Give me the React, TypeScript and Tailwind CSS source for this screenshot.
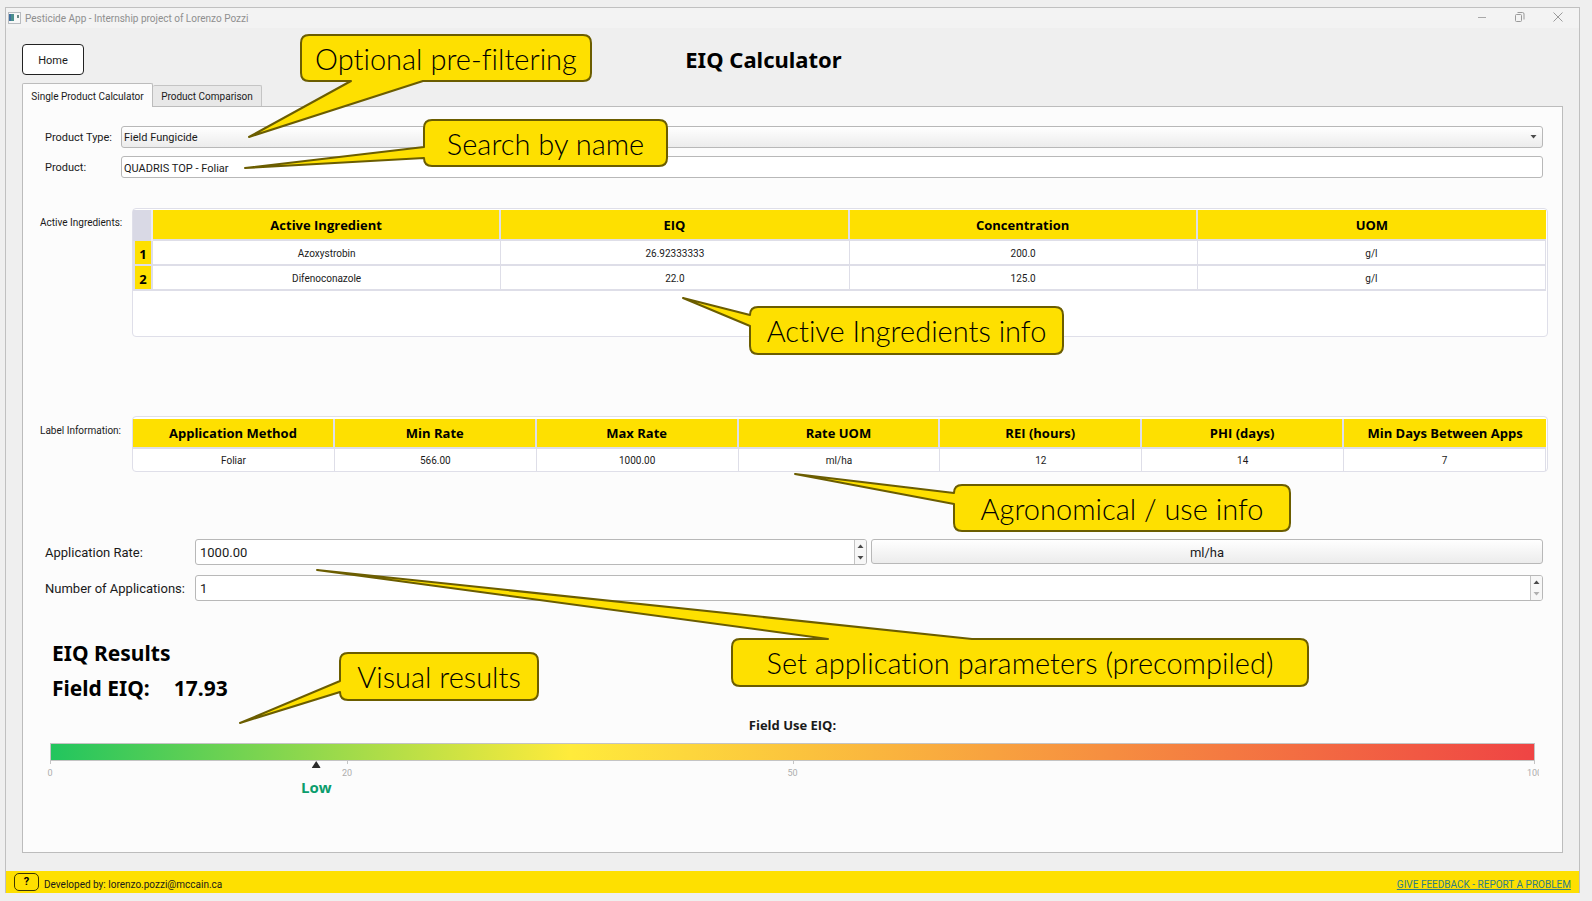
import React, { useState } from "react";

type CalloutProps = { text: string; place: string; w: number; h: number; path: string };

/* Speech-bubble annotation: the outline is drawn in the bubble's own coordinates. */
function Callout({ text, place, w, h, path }: CalloutProps) {
  return (
    <div className={`pointer-events-none absolute flex items-center justify-center ${place}`}>
      <svg className="absolute inset-0 overflow-visible" width={w} height={h} aria-hidden="true">
        <path d={path} fill="#fee000" stroke="#6b5d00" strokeWidth="2" strokeLinejoin="round" />
      </svg>
      <span className="relative pt-px font-['Lato',sans-serif] text-[29px] leading-8 font-light whitespace-nowrap text-black [font-variant-ligatures:none]">{text}</span>
    </div>
  );
}

const callouts: CalloutProps[] = [
  {
    text: "Optional pre-filtering",
    place: "left-[301px] top-[35px] h-[46px] w-[290px]",
    w: 290,
    h: 46,
    path: "M8 0H282Q290 0 290 8V38Q290 46 282 46H122L-52 102L50 46H8Q0 46 0 38V8Q0 0 8 0Z",
  },
  {
    text: "Search by name",
    place: "left-[424px] top-[120px] h-[46px] w-[243px]",
    w: 243,
    h: 46,
    path: "M8 0H235Q243 0 243 8V38Q243 46 235 46H8Q0 46 0 38L-179 48L0 27V8Q0 0 8 0Z",
  },
  {
    text: "Active Ingredients info",
    place: "left-[750px] top-[307px] h-[47px] w-[313px]",
    w: 313,
    h: 47,
    path: "M8 0H305Q313 0 313 8V39Q313 47 305 47H8Q0 47 0 39V19L-67 -9L0 8Q0 0 8 0Z",
  },
  {
    text: "Agronomical / use info",
    place: "left-[954px] top-[485px] h-[46px] w-[336px]",
    w: 336,
    h: 46,
    path: "M8 0H328Q336 0 336 8V38Q336 46 328 46H8Q0 46 0 38V19L-159 -11L0 8Q0 0 8 0Z",
  },
  {
    text: "Set application parameters (precompiled)",
    place: "left-[732px] top-[639px] h-[47px] w-[576px]",
    w: 576,
    h: 47,
    path: "M8 0H96L-415 -69L240 0H568Q576 0 576 8V39Q576 47 568 47H8Q0 47 0 39V8Q0 0 8 0Z",
  },
  {
    text: "Visual results",
    place: "left-[340px] top-[653px] h-[47px] w-[198px]",
    w: 198,
    h: 47,
    path: "M8 0H190Q198 0 198 8V39Q198 47 190 47H8Q0 47 0 39L-100 70L0 28V8Q0 0 8 0Z",
  },
];

const ingredients = [
  ["Azoxystrobin", "26.92333333", "200.0", "g/l"],
  ["Difenoconazole", "22.0", "125.0", "g/l"],
];
const labelHeads = ["Application Method", "Min Rate", "Max Rate", "Rate UOM", "REI (hours)", "PHI (days)", "Min Days Between Apps"];
const labelCells = ["Foliar", "566.00", "1000.00", "ml/ha", "12", "14", "7"];

function Spin({ id, value, step, min }: { id: string; value: number; step: number; min: number }) {
  const [n, setN] = useState(value);
  const shown = id === "rate" ? n.toFixed(2) : String(n);
  return (
    <div className="flex h-[26px] min-w-0 flex-1 overflow-hidden rounded-[3px] border border-[#b8b8b8] bg-white">
      <input
        id={id}
        inputMode="decimal"
        value={shown}
        onChange={(e) => setN(Number(e.target.value) || 0)}
        className="min-w-0 flex-1 bg-transparent px-1 pt-[2px] text-[13px] outline-none"
      />
      <div className="flex w-[12px] flex-col border-l border-[#c4c4c4] bg-[#f7f7f7]">
        <button aria-label="Increase" onClick={() => setN(n + step)} className="flex flex-1 items-center justify-center">
          <svg width="7" height="4" aria-hidden="true"><path d="M0.500 4L3.500 0.500L6.500 4Z" fill="#4a4a4a" /></svg>
        </button>
        <button aria-label="Decrease" disabled={n <= min} onClick={() => setN(n - step)} className="flex flex-1 items-center justify-center text-[#4a4a4a] disabled:text-[#b0b0b0]">
          <svg width="7" height="4" aria-hidden="true"><path d="M0.500 0L3.500 3.500L6.500 0Z" fill="currentColor" /></svg>
        </button>
      </div>
    </div>
  );
}

export default function App() {
  return (
    <div className="relative flex min-h-screen flex-col bg-[#efefef] pt-[7px] pr-3 pb-2 pl-[5px] font-['Roboto','Noto_Sans',sans-serif] text-[11px] leading-4 text-[#1a1a1a]">
      <div className="flex flex-1 flex-col border border-b-0 border-[#c0c0c0]">
        <header className="flex h-[20px] items-center bg-[#f3f3f3] pl-[2px] text-[10px] text-[#8f8f8f]">
          <svg width="13" height="12" aria-hidden="true">
            <rect x="0.500" y="0.500" width="12" height="11" fill="#f7f7f7" stroke="#b9bcc0" />
            <rect x="1" y="2" width="5" height="7" fill="#4b8f8c" />
            <rect x="1" y="2" width="2" height="7" fill="#3f6fa0" />
            <rect x="9" y="3" width="2" height="3" fill="#6d8a86" />
          </svg>
          <span className="flex-1 pt-[2px] pl-1">Pesticide App - Internship project of Lorenzo Pozzi</span>
          <div className="flex items-center gap-7 pr-4 pb-[2px]">
            <button aria-label="Minimize"><svg width="10" height="10" className="block" aria-hidden="true"><path d="M1 5.500H9" stroke="#a8a8a8" /></svg></button>
            <button aria-label="Restore">
              <svg width="10" height="10" className="block" fill="none" stroke="#9a9a9a" aria-hidden="true">
                <rect x="0.500" y="2.500" width="6" height="7" rx="1" />
                <path d="M2.500 0.500H7.500Q9 0.500 9 2V7.500" />
              </svg>
            </button>
            <button aria-label="Close"><svg width="10" height="10" className="block" aria-hidden="true"><path d="M0.500 0.500L9.500 9.500M9.500 0.500L0.500 9.500" stroke="#9a9a9a" /></svg></button>
          </div>
        </header>

        <div className="grid grid-cols-[1fr_auto_1fr] items-center pt-4 pr-[74px] pl-4">
          <button className="h-[31px] w-[62px] rounded-[4px] border border-[#222] bg-white pt-[2px]">Home</button>
          <h1 className="pb-[2px] font-['Noto_Sans',sans-serif] text-[22px] leading-7 font-bold text-black">EIQ Calculator</h1>
          <span />
        </div>

        <main className="mx-4 mt-2 mb-[18px] flex flex-1 flex-col">
          <div role="tablist" className="flex items-end text-[10px] whitespace-nowrap">
            <button role="tab" aria-selected="true" className="relative z-10 -mb-px h-[24px] w-[131px] rounded-t-[2px] border border-b-0 border-[#bcbcbc] bg-[#fcfcfc] pt-[2px]">Single Product Calculator</button>
            <button role="tab" aria-selected="false" className="h-[21px] w-[109px] rounded-t-[2px] border border-b-0 border-l-0 border-[#c4c4c4] bg-[#e8e8e8] pt-[2px]">Product Comparison</button>
          </div>

          <section className="flex-1 border border-[#bcbcbc] bg-[#fcfcfc] pt-[19px]">
            <div className="grid grid-cols-[76px_1fr] items-center gap-y-2 pr-[19px] pl-[22px]">
              <label htmlFor="type" className="pt-[2px]">Product Type:</label>
              <div className="relative">
                <select id="type" className="block h-[22px] w-full appearance-none rounded-[3px] border border-[#b8b8b8] bg-linear-to-b from-white to-[#ececec] px-[2px] pt-[2px] outline-none">
                  <option>Field Fungicide</option>
                </select>
                <svg className="pointer-events-none absolute top-[9px] right-[6px]" width="7" height="4" aria-hidden="true"><path d="M0.500 0L3.500 3.500L6.500 0Z" fill="#4a4a4a" /></svg>
              </div>
              <label htmlFor="product" className="pt-[2px]">Product:</label>
              <input id="product" defaultValue="QUADRIS TOP - Foliar" className="h-[22px] w-full rounded-[3px] border border-[#b8b8b8] bg-white px-[2px] pt-[2px] outline-none" />
            </div>

            <div className="mt-[30px] grid grid-cols-[92px_1fr] pr-[14px] pl-[17px] text-[10px]">
              <h2 className="pt-[7px]">Active Ingredients:</h2>
              <div className="h-[129px] rounded-[4px] border border-[#dfdfe9] bg-white pt-px pr-px">
                <table className="w-full table-fixed border-separate border-spacing-0 text-center">
                  <thead className="font-['Open_Sans','Noto_Sans',sans-serif]">
                    <tr className="h-[31px] text-[13px] text-black">
                      <th className="w-[20px] border-r-2 border-[#ececf4] bg-[#d9d9e5]" aria-label="Row" />
                      {["Active Ingredient", "EIQ", "Concentration", "UOM"].map((t) => (
                        <th key={t} scope="col" className="border-r-2 border-b-2 border-[#dedee8] bg-[#fee000] p-0 font-bold last:border-r-0">{t}</th>
                      ))}
                    </tr>
                  </thead>
                  <tbody>
                    {ingredients.map((r, i) => (
                      <tr key={r[0]} className="h-[25px]">
                        <th scope="row" className="border-2 border-t-0 border-[#dedee8] bg-[#fee000] p-0 pt-[2px] font-['Open_Sans','Noto_Sans',sans-serif] text-[13px] font-bold text-black">{i + 1}</th>
                        {r.map((c, j) => (
                          <td key={j} className="border-r border-b-2 border-[#dedee8] p-0 pt-[2px]">{c}</td>
                        ))}
                      </tr>
                    ))}
                  </tbody>
                </table>
              </div>
            </div>

            <div className="mt-[79px] grid grid-cols-[92px_1fr] pr-[14px] pl-[17px] text-[10px]">
              <h2 className="pt-[7px]">Label Information:</h2>
              <div className="rounded-[4px] border border-[#dfdfe9] bg-white pt-[2px] pr-px">
                <table className="w-full table-fixed border-separate border-spacing-0 text-center">
                  <thead className="font-['Open_Sans','Noto_Sans',sans-serif]">
                    <tr className="h-[30px] text-[13px] text-black">
                      {labelHeads.map((t) => (
                        <th key={t} scope="col" className="border-r-2 border-b-2 border-[#dedee8] bg-[#fee000] p-0 font-bold last:border-r-0">{t}</th>
                      ))}
                    </tr>
                  </thead>
                  <tbody>
                    <tr className="h-[22px]">
                      {labelCells.map((c, j) => (
                        <td key={j} className="border-r border-[#dedee8] p-0 pt-[2px]">{c}</td>
                      ))}
                    </tr>
                  </tbody>
                </table>
              </div>
            </div>

            <div className="mt-[67px] grid grid-cols-[150px_1fr] items-center gap-y-[10px] pr-[19px] pl-[22px] text-[13px]">
              <label htmlFor="rate" className="pt-[2px]">Application Rate:</label>
              <div className="flex gap-1">
                <Spin id="rate" value={1000} step={1} min={0} />
                <button className="h-[25px] flex-1 rounded-[3px] border border-[#b8b8b8] bg-linear-to-b from-white to-[#ececec] pt-[2px]">ml/ha</button>
              </div>
              <label htmlFor="count" className="pt-[2px]">Number of Applications:</label>
              <div className="flex"><Spin id="count" value={1} step={1} min={1} /></div>
            </div>

            <div className="mt-[35px] pl-[29px] font-['Noto_Sans',sans-serif] text-[21px] leading-[35px] font-bold text-black">
              <h2>EIQ Results</h2>
              <p className="flex gap-6"><span>Field EIQ:</span><output>17.93</output></p>
            </div>

            <div className="mt-[9px] pr-[27px] pl-[27px]">
              <h3 className="text-center font-['Open_Sans','Noto_Sans',sans-serif] text-[13px] leading-5 font-bold">Field Use EIQ:</h3>
              <div className="mt-[8px] h-[18px] border border-[#c4c4c4] bg-[linear-gradient(to_right,#22c55e_0%,#ffeb3b_35%,#ef4444_100%)]" />
              <div className="relative h-[54px] text-[9px] text-[#adadad]">
                <span className="absolute top-0 left-0 h-[3px] w-px bg-[#c4c4c4]" />
                <span className="absolute top-0 left-[20%] h-[3px] w-px bg-[#c4c4c4]" />
                <span className="absolute top-0 left-[50%] h-[3px] w-px bg-[#c4c4c4]" />
                <span className="absolute top-0 right-0 h-[3px] w-px bg-[#c4c4c4]" />
                <span className="absolute top-[4px] left-0 -translate-x-1/2">0</span>
                <span className="absolute top-[4px] left-[20%] -translate-x-1/2">20</span>
                <span className="absolute top-[4px] left-[50%] -translate-x-1/2">50</span>
                <span className="absolute top-[4px] -right-1 w-3 overflow-hidden">100</span>
                <div className="absolute top-0 left-[17.930%] flex -translate-x-1/2 flex-col items-center">
                  <svg width="9" height="7" className="block" aria-hidden="true"><path d="M0 7L4.500 0L9 7Z" fill="#2b2b2b" /></svg>
                  <strong className="pt-[9px] font-['Open_Sans','Noto_Sans',sans-serif] text-[15px] leading-5 font-bold text-[#0b9d6c]">Low</strong>
                </div>
              </div>
            </div>
          </section>
        </main>

        <footer className="flex h-[22px] items-center bg-[#fee000] pr-2 pl-2 text-[10px]">
          <button className="h-[18px] w-[25px] rounded-[5px] border border-[#3d3700] text-[11px] font-bold text-black">?</button>
          <span className="flex-1 pt-[6px] pl-[5px]">Developed by: lorenzo.pozzi@mccain.ca</span>
          <a href="#feedback" className="pt-[5px] text-[#2f7d86] underline">GIVE FEEDBACK - REPORT A PROBLEM</a>
        </footer>
      </div>

      {callouts.map((c) => (
        <Callout key={c.text} {...c} />
      ))}
    </div>
  );
}
